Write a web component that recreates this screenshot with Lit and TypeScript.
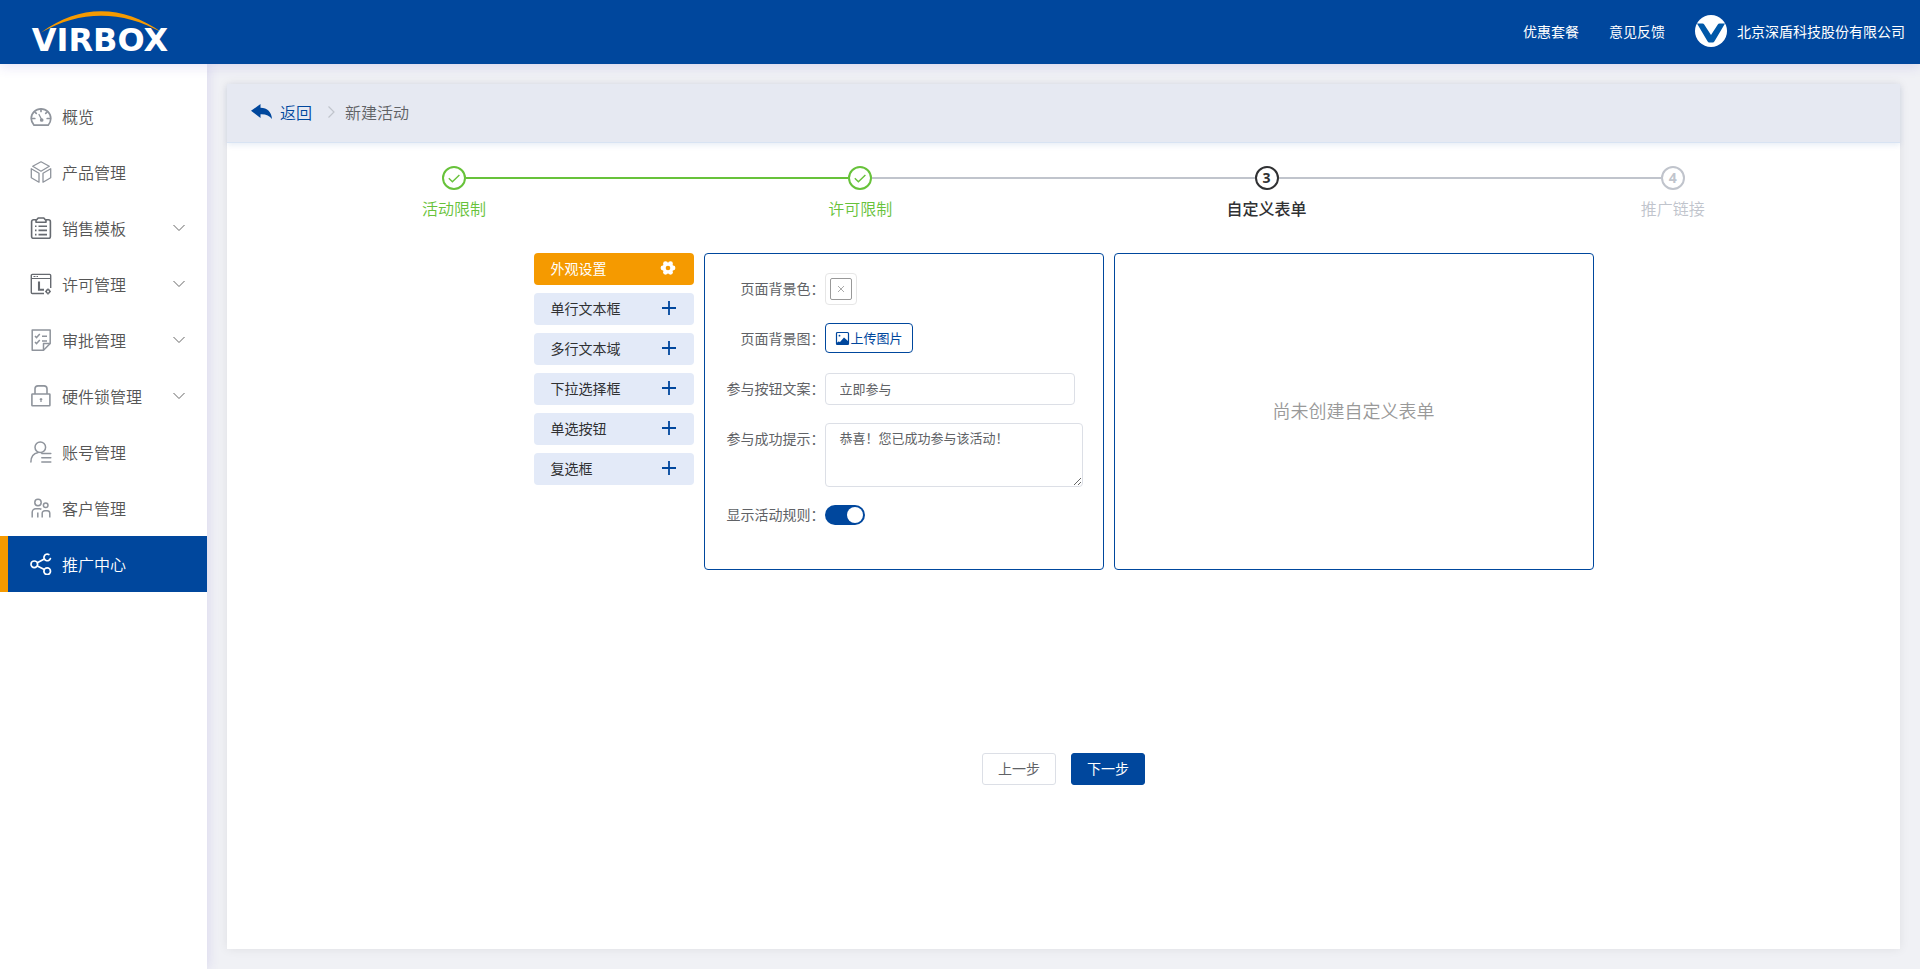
import { LitElement, html, css, svg, nothing } from "lit";
import { customElement, state } from "lit/decorators.js";
import { classMap } from "lit/directives/class-map.js";

const FONT = css`"Noto Sans CJK SC", "Noto Sans", sans-serif`;

const menuIcons = {
  overview: svg`<g stroke="#8f949c" stroke-width="1.7" stroke-linecap="round"><path d="M4 20.2C2.500 18.400 1.200 16.400 1.200 13.600a9.800 9.800 0 0 1 19.600 0c0 2.800-1 4.800-2.600 6.600z"/><path d="M11 4v2.500M4.800 7l1.500 1.400M17.200 7l-1.500 1.400M2.600 13.500h2.200M19.400 13.500h-2.200" /><path d="M9 9.500l2.600 5" stroke-width="1.300"/><circle cx="11.700" cy="15" r="1" fill="#8f949c"/></g>`,
  product: svg`<g stroke="#8f949c" stroke-width="1.3" stroke-linejoin="round"><path d="M11 .8l8.300 4.500L11 10.200 2.700 5.300z"/><path d="M1.300 7.700l7.700 4.500v9L1.300 16.700z"/><path d="M20.700 7.700L13 12.200v9l7.700-4.500z"/></g>`,
  template: svg`<g stroke="#666a70" stroke-width="1.6" stroke-linejoin="round"><path d="M6 2.800H3.600A2 2 0 0 0 1.600 4.800v14.600a2 2 0 0 0 2 2h14.800a2 2 0 0 0 2-2V4.800a2 2 0 0 0-2-2H16"/><path d="M6 5.200V3.600L8.200 1h5.600L16 3.600v1.600z"/><path d="M5 9.200h1.500M8.500 9.200h8.500M5 13.400h1.500M8.500 13.400h8.500M5 17.600h1.500M8.500 17.600h8.500"/></g>`,
  license: svg`<g stroke="#666a70" stroke-width="1.4"><path d="M14 20.500H2.300a1 1 0 0 1-1-1V2.400a1 1 0 0 1 1-1h17.400a1 1 0 0 1 1 1V15"/><path d="M1.300 5.500h19.400M3.500 3.500h2M6.500 3.500h1.500" stroke-width="1.100"/><path d="M9 8.500v8.200h5" stroke-width="2.100"/><circle cx="18" cy="18.500" r="1.700"/><path d="M18 15.600v1M18 20.400v1M15.200 18.500h1M19.800 18.500h1"/></g>`,
  approve: svg`<g stroke="#8f949c" stroke-width="1.5" stroke-linejoin="round"><path d="M13.500 21.200H2.200V1h18v13.500z"/><path d="M13.500 21.200v-6.700h6.700"/><path d="M5 7l1.600 1.600L9.800 5M5 13l1.600 1.600L9.800 11M12 7.300h5M12 12h5"/></g>`,
  lock: svg`<g stroke="#8f949c" stroke-width="1.6"><rect x="1.900" y="9" width="18" height="11.800" rx=".6"/><path d="M5 9V3.800A3 3 0 0 1 8 .9h6a3 3 0 0 1 3 2.900V9"/><path d="M11 13v4M9.700 14.300h2.600" stroke-width="1.300"/></g>`,
  account: svg`<g stroke="#8f949c" stroke-width="1.500" stroke-linecap="round"><circle cx="10.300" cy="6.200" r="5.300"/><path d="M.9 21c0-5.500 3-8.800 7.300-9.600"/><path d="M11.800 12.500h9M11.800 16.700h9M11.800 20.900h9"/></g>`,
  customer: svg`<g stroke="#8f949c" stroke-width="1.500"><circle cx="8" cy="5.500" r="3.200"/><circle cx="15.700" cy="8.300" r="2.300"/><path d="M2.200 20.500v-5.200a3.600 3.600 0 0 1 3.600-3.600h3.600a3 3 0 0 1 2 .7M7.800 20.500v-5M12.200 20.500v-4.200a2.600 2.600 0 0 1 2.600-2.600h2.400a2.600 2.600 0 0 1 2.600 2.600v4.200"/></g>`,
  share: svg`<g stroke="#fff" stroke-width="1.700"><circle cx="4.300" cy="11.300" r="3.300"/><circle cx="17.200" cy="18.200" r="3.300"/><path d="M18.800 1.500A3.300 3.300 0 1 0 20.400 5.500" stroke-linecap="round"/><path d="M7.300 9.800l7-3.800M7.300 12.900l7 3.700"/></g>`,
};

type IconName = keyof typeof menuIcons;

const menu: { icon: IconName; label: string; sub?: boolean; active?: boolean }[] = [
  { icon: "overview", label: "概览" },
  { icon: "product", label: "产品管理" },
  { icon: "template", label: "销售模板", sub: true },
  { icon: "license", label: "许可管理", sub: true },
  { icon: "approve", label: "审批管理", sub: true },
  { icon: "lock", label: "硬件锁管理", sub: true },
  { icon: "account", label: "账号管理" },
  { icon: "customer", label: "客户管理" },
  { icon: "share", label: "推广中心", active: true },
];

@customElement("app-topbar")
class AppTopbar extends LitElement {
  static styles = css`
    :host {
      display: block;
      position: relative;
      z-index: 2;
      background: #00479d;
      box-shadow: 0 2px 12px rgba(80, 60, 200, 0.16);
      color: #fff;
      font: 14px/20px ${FONT};
    }
    .bar {
      display: flex;
      align-items: center;
      justify-content: space-between;
      height: 64px;
      padding: 0 15px 0 20px;
    }
    .logo {
      display: block;
    }
    .word {
      font: 700 32px "DejaVu Sans", sans-serif;
    }
    .right {
      display: flex;
      align-items: center;
      gap: 30px;
      padding-bottom: 2px;
    }
    .link {
      color: inherit;
      text-decoration: none;
    }
    .user {
      display: flex;
      align-items: center;
      gap: 10px;
    }
  `;
  render() {
    return html`<header class="bar">
      <a href="#" aria-label="VIRBOX">
        <svg class="logo" width="160" height="64" viewBox="0 0 160 64">
          <path d="M21 32.500C60 4 102 4 142 32.500 102 10 60 10 21 32.500z" fill="#f59a00" />
          <text class="word" x="80" y="51" text-anchor="middle" fill="#fff">VIRBOX</text>
        </svg>
      </a>
      <nav class="right">
        <a class="link" href="#">优惠套餐</a>
        <a class="link" href="#">意见反馈</a>
        <a class="link user" href="#">
          <svg width="32" height="32" viewBox="0 0 32 32">
            <circle cx="16" cy="16" r="16" fill="#fff" />
            <path d="M2 8.500h5.500c.8 0 1.300.4 1.700 1L16 20l6.800-10.500c.4-.6.9-1 1.700-1H30L19.500 26.200c-.5.900-1.200 1.300-2 1.300h-3c-.8 0-1.500-.4-2-1.300z" fill="#0058a8" />
          </svg>
          北京深盾科技股份有限公司
        </a>
      </nav>
    </header>`;
  }
}

@customElement("app-sidebar")
class AppSidebar extends LitElement {
  static styles = css`
    :host {
      display: block;
      background: #fff;
      box-shadow: 0 0 12px rgba(80, 60, 200, 0.16);
      font: 350 16px/24px ${FONT};
    }
    .nav {
      padding-top: 24px;
    }
    .item {
      box-sizing: border-box;
      display: flex;
      align-items: center;
      gap: 10px;
      height: 56px;
      padding: 0 22px;
      border-left: 8px solid transparent;
      color: #555;
      text-decoration: none;
    }
    .active {
      border-left-color: #f59a00;
      background: #00479d;
      color: #fff;
    }
    .arrow {
      margin-left: auto;
    }
  `;
  render() {
    return html`<nav class="nav">
      ${menu.map(
        (m) => html`<a href="#" class=${classMap({ item: true, active: !!m.active })}>
          <svg width="22" height="22" viewBox="0 0 22 22" fill="none">${menuIcons[m.icon]}</svg>
          <span>${m.label}</span>
          ${m.sub
            ? html`<svg class="arrow" width="12" height="12" viewBox="0 0 12 12" fill="none">
                <path d="M.500 3l5.500 5.500 5.500-5.500" stroke="#666" />
              </svg>`
            : nothing}
        </a>`
      )}
    </nav>`;
  }
}

@customElement("app-steps")
class AppSteps extends LitElement {
  static styles = css`
    :host {
      display: block;
      font: 350 16px/24px ${FONT};
    }
    .steps {
      display: grid;
      grid-template-columns: repeat(4, 1fr);
      margin: 0;
      padding: 0;
      list-style: none;
    }
    .step {
      display: flex;
      flex-direction: column;
      align-items: center;
      gap: 6px;
      color: #c0c4cc;
    }
    .rail {
      display: grid;
      grid-template-columns: 1fr 24px 1fr;
      align-items: center;
      align-self: stretch;
    }
    .line {
      height: 2px;
      background: #c0c4cc;
    }
    .none {
      background: none;
    }
    .green {
      background: #67c23a;
    }
    .dot {
      box-sizing: border-box;
      display: grid;
      place-items: center;
      height: 24px;
      border: 2px solid;
      border-radius: 50%;
      font: 700 14px/20px "Noto Sans", sans-serif;
    }
    .done {
      color: #67c23a;
    }
    .current {
      color: #303133;
      font-weight: 500;
    }
  `;
  render() {
    const steps = [
      { t: "活动限制", s: "done", l: "none", r: "green" },
      { t: "许可限制", s: "done", l: "green", r: "" },
      { t: "自定义表单", s: "current", l: "", r: "" },
      { t: "推广链接", s: "wait", l: "", r: "none" },
    ];
    return html`<ol class="steps">
      ${steps.map(
        (p, i) => html`<li class="step ${p.s}">
          <div class="rail">
            <span class="line ${p.l}"></span>
            <span class="dot"
              >${p.s === "done"
                ? html`<svg width="12" height="12" viewBox="0 0 12 12" fill="none">
                    <path d="M.800 6.200l3.600 3.500L11.400 3" stroke="currentColor" stroke-width="1.400" />
                  </svg>`
                : i + 1}</span
            >
            <span class="line ${p.r}"></span>
          </div>
          <span>${p.t}</span>
        </li>`
      )}
    </ol>`;
  }
}

@customElement("form-builder")
class FormBuilder extends LitElement {
  @state() private showRules = true;

  static styles = css`
    :host {
      display: block;
      font: 14px/20px ${FONT};
      color: #606266;
    }
    .builder {
      display: grid;
      grid-template-columns: 160px 400px 480px;
      gap: 10px;
      justify-content: center;
    }
    .widgets {
      display: flex;
      flex-direction: column;
      gap: 8px;
    }
    .widget {
      display: flex;
      align-items: center;
      justify-content: space-between;
      height: 32px;
      padding: 0 18px 2px 17px;
      border: 0;
      border-radius: 4px;
      background: #e3eaf8;
      color: #303133;
      font: inherit;
      cursor: pointer;
    }
    .selected {
      background: #f59a00;
      color: #fff;
    }
    .panel {
      box-sizing: border-box;
      border: 1px solid #00479d;
      border-radius: 4px;
    }
    .form {
      display: grid;
      gap: 18px;
      padding: 19px 20px 44px;
    }
    .row {
      display: grid;
      grid-template-columns: 100px 1fr;
      align-items: start;
      justify-items: start;
      min-height: 32px;
    }
    .short {
      min-height: 20px;
    }
    .label {
      justify-self: end;
      line-height: 30px;
      white-space: nowrap;
    }
    .short .label {
      line-height: 18px;
    }
    .picker {
      box-sizing: border-box;
      display: grid;
      place-items: center;
      width: 32px;
      height: 32px;
      padding: 0;
      border: 1px solid #e6e6e6;
      border-radius: 4px;
      background: #fff;
    }
    .swatch {
      box-sizing: border-box;
      display: grid;
      place-items: center;
      width: 22px;
      height: 22px;
      border: 1px solid #999;
      border-radius: 2px;
    }
    .upload {
      box-sizing: border-box;
      display: flex;
      align-items: center;
      gap: 1px;
      height: 30px;
      padding: 0 9px;
      border: 1px solid #00479d;
      border-radius: 4px;
      background: #fff;
      color: #00479d;
      font: 13px/20px ${FONT};
      white-space: nowrap;
    }
    .field {
      box-sizing: border-box;
      border: 1px solid #dcdfe6;
      border-radius: 4px;
      background: #fff;
      color: #606266;
      font: 13px/20px ${FONT};
      outline: 0;
    }
    .input {
      width: 250px;
      height: 32px;
      padding: 0 14px 2px;
    }
    .area {
      width: 258px;
      height: 64px;
      padding: 4px 14px;
    }
    .switch {
      appearance: none;
      box-sizing: border-box;
      display: flex;
      width: 40px;
      height: 20px;
      margin: 0;
      padding: 2px;
      border-radius: 10px;
      background: #c0c4cc;
      cursor: pointer;
    }
    .switch::before {
      content: "";
      width: 16px;
      height: 16px;
      border-radius: 50%;
      background: #fff;
    }
    .switch:checked {
      justify-content: flex-end;
      background: #00479d;
    }
    .preview {
      display: grid;
      place-items: center;
      padding-bottom: 3px;
      color: #999;
      font-size: 18px;
      font-weight: 350;
      line-height: 24px;
    }
  `;

  render() {
    const widgets = ["单行文本框", "多行文本域", "下拉选择框", "单选按钮", "复选框"];
    const lobes = [0, 60, 120, 180, 240, 300].map((a) => (a * Math.PI) / 180);
    return html`<div class="builder">
      <div class="widgets">
        <button type="button" class="widget selected">
          外观设置
          <svg width="16" height="16" viewBox="0 0 16 16" fill="#fff">
            <circle cx="8" cy="8" r="5.500" />
            ${lobes.map(
              (a) => svg`<circle cx=${8 + 5 * Math.cos(a)} cy=${8 + 5 * Math.sin(a)} r="2.400" />`
            )}
            <circle cx="8" cy="8" r="2.300" fill="#f59a00" />
          </svg>
        </button>
        ${widgets.map(
          (w) => html`<button type="button" class="widget">
            ${w}
            <svg width="14" height="14" viewBox="0 0 14 14">
              <path d="M0 7h14M7 0v14" stroke="#00479d" stroke-width="1.800" />
            </svg>
          </button>`
        )}
      </div>
      <form class="panel form">
        <div class="row">
          <label class="label" for="color">页面背景色：</label>
          <button type="button" class="picker" id="color">
            <span class="swatch">
              <svg width="8" height="8" viewBox="0 0 8 8">
                <path d="M1 1l6 6M7 1L1 7" stroke="#aaa" />
              </svg>
            </span>
          </button>
        </div>
        <div class="row">
          <label class="label" for="image">页面背景图：</label>
          <button type="button" class="upload" id="image">
            <svg width="15" height="15" viewBox="0 0 15 15">
              <rect x="1.500" y="1.500" width="12" height="12" rx="1" fill="#fff" stroke="#00479d" stroke-width="1.200" />
              <path d="M1.500 12l2-1.500 1.500.500 4-4.500 4.500 4v3h-12z" fill="#00479d" />
              <circle cx="4.500" cy="4.700" r=".900" fill="#00479d" />
            </svg>
            上传图片
          </button>
        </div>
        <div class="row">
          <label class="label" for="text">参与按钮文案：</label>
          <input class="field input" id="text" type="text" value="立即参与" />
        </div>
        <div class="row">
          <label class="label" for="tip">参与成功提示：</label>
          <textarea class="field area" id="tip" .value=${"恭喜！您已成功参与该活动！"}></textarea>
        </div>
        <div class="row short">
          <label class="label" for="rules">显示活动规则：</label>
          <input
            class="switch"
            id="rules"
            type="checkbox"
            role="switch"
            .checked=${this.showRules}
            @change=${(e: Event) => (this.showRules = (e.target as HTMLInputElement).checked)}
          />
        </div>
      </form>
      <section class="panel preview">尚未创建自定义表单</section>
    </div>`;
  }
}

@customElement("app-root")
class AppRoot extends LitElement {
  static styles = css`
    :host {
      display: grid;
      grid-template-rows: auto 1fr;
      min-height: 100vh;
      background: #f0f1f5;
      font: 14px/20px ${FONT};
      color: #606266;
    }
    .body {
      display: grid;
      grid-template-columns: 207px 1fr;
    }
    .main {
      display: grid;
      padding: 20px;
    }
    .card {
      display: flex;
      flex-direction: column;
      background: #fff;
      box-shadow: 0 0 10px rgba(0, 0, 0, 0.08);
    }
    .crumbs {
      box-sizing: border-box;
      display: flex;
      align-items: center;
      gap: 8px;
      height: 59px;
      padding: 0 24px 2px;
      border-bottom: 1px solid #d8e3f3;
      background: #e6e9f2;
      box-shadow: 0 2px 6px rgba(0, 71, 157, 0.1);
      font-size: 16px;
      font-weight: 350;
    }
    .back {
      display: flex;
      align-items: center;
      gap: 8px;
      color: #00479d;
      text-decoration: none;
    }
    .content {
      display: flex;
      flex-direction: column;
      padding: 23px 24px;
    }
    .builder {
      margin-top: 33px;
    }
    .actions {
      display: flex;
      justify-content: center;
      gap: 15px;
      margin-top: 183px;
    }
    .btn {
      box-sizing: border-box;
      height: 32px;
      padding: 0 15px 2px;
      border: 1px solid #dcdfe6;
      border-radius: 3px;
      background: #fff;
      color: #606266;
      font: inherit;
      cursor: pointer;
    }
    .primary {
      border-color: #00479d;
      background: #00479d;
      color: #fff;
    }
  `;
  render() {
    return html`
      <app-topbar></app-topbar>
      <div class="body">
        <app-sidebar></app-sidebar>
        <main class="main">
          <div class="card">
            <nav class="crumbs">
              <a class="back" href="#">
                <svg width="21" height="16" viewBox="0 0 21 16">
                  <path d="M0 6.800L9.500 0v3.800c7 .2 11 4.200 11.500 11.200-2.500-3.500-6-5-11.500-4.800V14z" fill="#00479d" />
                </svg>
                返回
              </a>
              <svg width="17" height="14" viewBox="0 0 17 14" fill="none">
                <path d="M8.500 1.500l5.500 5.500-5.500 5.500" stroke="#c0c4cc" stroke-width="1.200" />
              </svg>
              <span>新建活动</span>
            </nav>
            <div class="content">
              <app-steps></app-steps>
              <form-builder class="builder"></form-builder>
              <div class="actions">
                <button type="button" class="btn">上一步</button>
                <button type="button" class="btn primary">下一步</button>
              </div>
            </div>
          </div>
        </main>
      </div>
    `;
  }
}
